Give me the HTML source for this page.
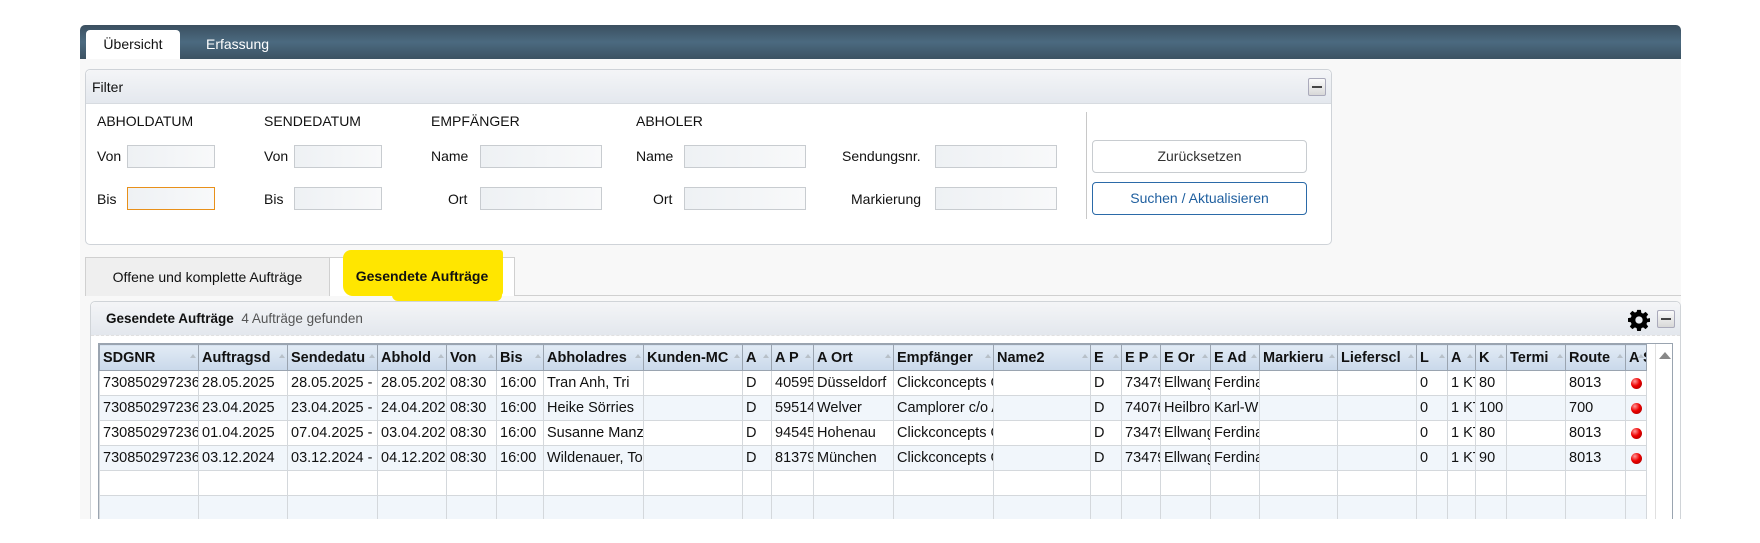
<!DOCTYPE html>
<html><head><meta charset="utf-8"><style>
*{box-sizing:border-box;margin:0;padding:0}
body{width:1760px;height:543px;overflow:hidden;background:#fff;font-family:"Liberation Sans",Arial,sans-serif;color:#111;position:relative}
.a{position:absolute}
.bar{left:80px;top:25px;width:1601px;height:34px;border-radius:5px 5px 0 0;background:linear-gradient(#3b4f5f,#4b6a80 50%,#3c5262)}
.tab1{left:86px;top:30px;width:94px;height:29px;background:#fff;border-radius:4px 4px 0 0;font-size:14px;text-align:center;line-height:29px}
.tab2{left:206px;top:30px;font-size:14px;color:#fff;line-height:29px}
.bg{left:80px;top:59px;width:1601px;height:460px;background:#f8f8f8}
.fp{left:85px;top:69px;width:1247px;height:176px;border:1px solid #cfd3d8;border-radius:5px;background:#fff}
.fh{left:0;top:0;width:100%;height:34px;background:linear-gradient(#f4f5f7,#e4e8ee);border-bottom:1px solid #d7dbe0;border-radius:5px 5px 0 0;font-size:14px;line-height:34px;padding-left:6px}
.min{width:18px;height:18px;border:1px solid #aab;border-radius:2px;background:linear-gradient(#fafafa,#d8d8d8)}
.min:after{content:"";position:absolute;left:3px;top:7px;width:10px;height:2px;background:#444}
.lb{font-size:14px}
.in{height:23px;border:1px solid #c8ccd0;background:linear-gradient(90deg,#eef1f4,#f8f9fa)}
.btn{width:215px;height:33px;border:1px solid #c8ccd0;border-radius:4px;background:#fff;font-size:14px;text-align:center;line-height:31px;color:#333}
.t{font-size:14px;line-height:38px;text-align:center;height:39px}
.gp{left:90px;top:301px;width:1591px;height:218px;border:1px solid #d0d4d8;border-bottom:none;border-radius:5px 5px 0 0;background:#fff}
table{border-collapse:collapse;table-layout:fixed;font-size:14.5px}
td,th{white-space:nowrap;overflow:hidden;height:25px;border:1px solid #d4d8dc;padding:0 3px;text-align:left}
th{background:linear-gradient(#e2ebf5,#c9d8ea);font-weight:bold;border-color:#9aa4b0;height:26px;position:relative}
th:after{content:"";position:absolute;right:2px;top:6px;width:0;height:0;border:3px solid transparent;border-bottom:4px solid #b8c0c8}
tr.o td{background:#f1f6fb}
.dot{display:inline-block;width:11px;height:11px;border-radius:50%;background:radial-gradient(circle at 35% 30%,#ff9a9a,#e00 45%,#900);margin-left:5px;vertical-align:middle}
</style></head><body>
<div class="a bar"></div>
<div class="a tab1">Übersicht</div>
<div class="a tab2">Erfassung</div>
<div class="a bg"></div>
<div class="a fp">
 <div class="a fh">Filter</div>
 <div class="a min" style="left:1222px;top:8px"></div>
</div>
<div class="a lb" style="left:97px;top:113px">ABHOLDATUM</div>
<div class="a lb" style="left:264px;top:113px">SENDEDATUM</div>
<div class="a lb" style="left:431px;top:113px">EMPFÄNGER</div>
<div class="a lb" style="left:636px;top:113px">ABHOLER</div>
<div class="a lb" style="left:97px;top:148px">Von</div>
<div class="a lb" style="left:97px;top:191px">Bis</div>
<div class="a lb" style="left:264px;top:148px">Von</div>
<div class="a lb" style="left:264px;top:191px">Bis</div>
<div class="a lb" style="left:431px;top:148px">Name</div>
<div class="a lb" style="left:448px;top:191px">Ort</div>
<div class="a lb" style="left:636px;top:148px">Name</div>
<div class="a lb" style="left:653px;top:191px">Ort</div>
<div class="a lb" style="left:842px;top:148px">Sendungsnr.</div>
<div class="a lb" style="left:851px;top:191px">Markierung</div>
<div class="a in" style="left:127px;top:145px;width:88px"></div>
<div class="a in" style="left:127px;top:187px;width:88px;border-color:#e8901a"></div>
<div class="a in" style="left:294px;top:145px;width:88px"></div>
<div class="a in" style="left:294px;top:187px;width:88px"></div>
<div class="a in" style="left:480px;top:145px;width:122px"></div>
<div class="a in" style="left:480px;top:187px;width:122px"></div>
<div class="a in" style="left:684px;top:145px;width:122px"></div>
<div class="a in" style="left:684px;top:187px;width:122px"></div>
<div class="a in" style="left:935px;top:145px;width:122px"></div>
<div class="a in" style="left:935px;top:187px;width:122px"></div>
<div class="a" style="left:1086px;top:112px;width:1px;height:107px;background:#c8c8c8"></div>
<div class="a btn" style="left:1092px;top:140px">Zurücksetzen</div>
<div class="a btn" style="left:1092px;top:182px;border-color:#2b6aa8;color:#1f5f9f">Suchen / Aktualisieren</div>
<div class="a" style="left:85px;top:295px;width:1596px;height:1px;background:#d0d0d0"></div>
<div class="a t" style="left:85px;top:257px;width:245px;border:1px solid #d0d0d0;border-bottom:none;background:#efefef">Offene und komplette Aufträge</div>
<div class="a t" style="left:329px;top:257px;width:186px;border:1px solid #d0d0d0;border-bottom:none;background:#fff"></div>
<div class="a" style="left:343px;top:250px;width:160px;height:46px;background:#ffe600;border-radius:8px 3px 4px 10px"></div>
<div class="a" style="left:392px;top:290px;width:110px;height:11px;background:#ffe600;border-radius:0 0 6px 6px"></div>
<div class="a t" style="left:329px;top:257px;width:186px;font-weight:bold">Gesendete Aufträge</div>
<div class="a gp">
 <div class="a" style="left:0;top:0;width:100%;height:34px;background:linear-gradient(#f4f5f7,#e3e7ed);border-bottom:1px dashed #e0e0e0;border-radius:5px 5px 0 0"></div>
 <div class="a" style="left:15px;top:9px;font-size:13.5px"><b>Gesendete Aufträge</b>&nbsp;&nbsp;<span style="color:#555">4 Aufträge gefunden</span></div>
 <svg class="a" style="left:1537px;top:7px" width="22" height="22" viewBox="0 0 24 24"><path fill="#000" d="M10 1h4l.6 3.2 1.9.8 2.7-1.9 2.8 2.8-1.9 2.7.8 1.9L24 10v4l-3.1.5-.8 1.9 1.9 2.8-2.8 2.8-2.7-1.9-1.9.8L14 24h-4l-.6-3.1-1.9-.8-2.7 1.9-2.8-2.8 1.9-2.8-.8-1.9L0 14v-4l3.1-.6.8-1.9L2 4.9l2.8-2.8 2.7 1.9 1.9-.8zM12 8a4 4 0 100 8 4 4 0 000-8z"/></svg>
 <div class="a min" style="left:1566px;top:8px"></div>
</div>
<div class="a" style="left:98px;top:343px;width:1575px;height:176px;border:1px solid #9aa4b0;border-bottom:none;background:#fff;overflow:hidden">
<table style="width:1547px">
<colgroup><col style="width:99px"><col style="width:89px"><col style="width:90px"><col style="width:69px"><col style="width:50px"><col style="width:47px"><col style="width:100px"><col style="width:99px"><col style="width:29px"><col style="width:42px"><col style="width:80px"><col style="width:100px"><col style="width:97px"><col style="width:31px"><col style="width:39px"><col style="width:50px"><col style="width:49px"><col style="width:78px"><col style="width:79px"><col style="width:31px"><col style="width:28px"><col style="width:31px"><col style="width:59px"><col style="width:60px"><col style="width:21px"></colgroup>
<tr><th>SDGNR</th><th>Auftragsd</th><th>Sendedatu</th><th>Abhold</th><th>Von</th><th>Bis</th><th>Abholadres</th><th>Kunden-MC</th><th>A</th><th>A P</th><th>A Ort</th><th>Empfänger</th><th>Name2</th><th>E</th><th>E P</th><th>E Or</th><th>E Ad</th><th>Markieru</th><th>Lieferscl</th><th>L</th><th>A</th><th>K</th><th>Termi</th><th>Route</th><th>A S</th></tr>
<tr><td>730850297236</td><td>28.05.2025</td><td>28.05.2025 -</td><td>28.05.202</td><td>08:30</td><td>16:00</td><td>Tran Anh, Tri</td><td></td><td>D</td><td>40595</td><td>Düsseldorf</td><td>Clickconcepts G</td><td></td><td>D</td><td>73479</td><td>Ellwangen</td><td>Ferdinand</td><td></td><td></td><td>0</td><td>1 KT</td><td>80</td><td></td><td>8013</td><td style="padding:0"><span class="dot"></span></td></tr>
<tr class="o"><td>730850297236</td><td>23.04.2025</td><td>23.04.2025 -</td><td>24.04.202</td><td>08:30</td><td>16:00</td><td>Heike Sörries</td><td></td><td>D</td><td>59514</td><td>Welver</td><td>Camplorer c/o A</td><td></td><td>D</td><td>74076</td><td>Heilbronn</td><td>Karl-W</td><td></td><td></td><td>0</td><td>1 KT</td><td>100</td><td></td><td>700</td><td style="padding:0"><span class="dot"></span></td></tr>
<tr><td>730850297236</td><td>01.04.2025</td><td>07.04.2025 -</td><td>03.04.202</td><td>08:30</td><td>16:00</td><td>Susanne Manz</td><td></td><td>D</td><td>94545</td><td>Hohenau</td><td>Clickconcepts G</td><td></td><td>D</td><td>73479</td><td>Ellwangen</td><td>Ferdinand</td><td></td><td></td><td>0</td><td>1 KT</td><td>80</td><td></td><td>8013</td><td style="padding:0"><span class="dot"></span></td></tr>
<tr class="o"><td>730850297236</td><td>03.12.2024</td><td>03.12.2024 -</td><td>04.12.202</td><td>08:30</td><td>16:00</td><td>Wildenauer, To</td><td></td><td>D</td><td>81379</td><td>München</td><td>Clickconcepts G</td><td></td><td>D</td><td>73479</td><td>Ellwangen</td><td>Ferdinand</td><td></td><td></td><td>0</td><td>1 KT</td><td>90</td><td></td><td>8013</td><td style="padding:0"><span class="dot"></span></td></tr>
<tr><td></td><td></td><td></td><td></td><td></td><td></td><td></td><td></td><td></td><td></td><td></td><td></td><td></td><td></td><td></td><td></td><td></td><td></td><td></td><td></td><td></td><td></td><td></td><td></td><td></td></tr>
<tr class="o"><td></td><td></td><td></td><td></td><td></td><td></td><td></td><td></td><td></td><td></td><td></td><td></td><td></td><td></td><td></td><td></td><td></td><td></td><td></td><td></td><td></td><td></td><td></td><td></td><td></td></tr>
</table>
<div class="a" style="left:1556px;top:0;width:19px;height:200px;background:#fff;border-left:1px solid #e0e0e0"></div>
<div class="a" style="left:1560px;top:8px;width:0;height:0;border:6px solid transparent;border-bottom:7px solid #888;border-top:none"></div>
</div>
</body></html>
